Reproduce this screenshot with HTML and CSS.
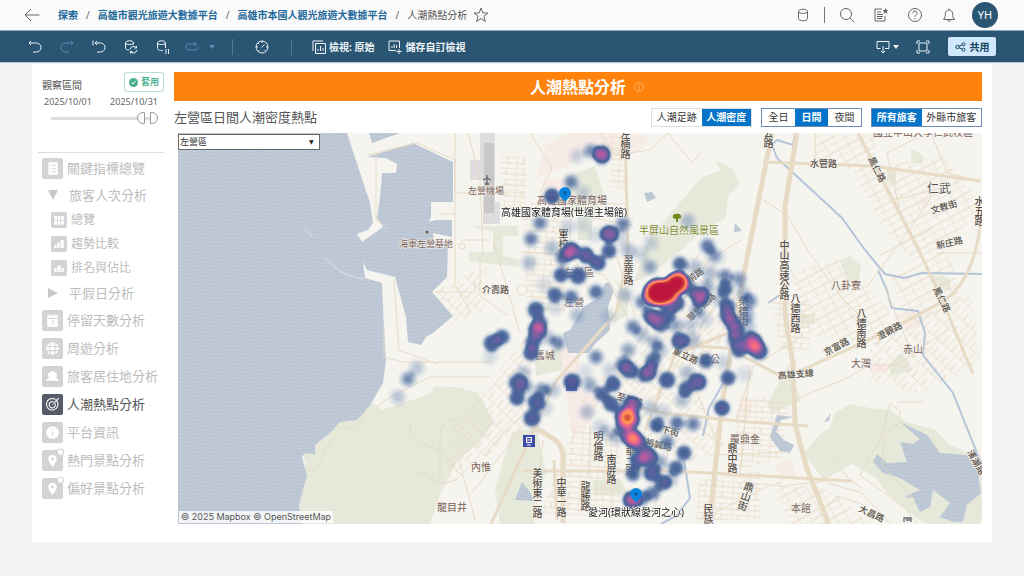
FILE: index.html
```html
<!DOCTYPE html>
<html lang="zh-Hant">
<head>
<meta charset="utf-8">
<meta name="viewport" content="width=device-width, initial-scale=1">
<title>人潮熱點分析</title>
<link rel="stylesheet" href="styles.css">
</head>
<body>
<header class="topbar">
  <button class="icon-btn back" aria-label="返回"><svg width="16" height="14" viewBox="0 0 16 14"><path d="M15.500 7H1M7 1 1 7l6 6"/></svg></button>
  <nav class="crumbs" aria-label="導覽路徑">
    <a href="#">探索</a><span class="slash">/</span>
    <a href="#">高雄市觀光旅遊大數據平台</a><span class="slash">/</span>
    <a href="#">高雄市本國人觀光旅遊大數據平台</a><span class="slash">/</span>
    <span class="current">人潮熱點分析</span>
  </nav>
  <button class="icon-btn star" aria-label="我的最愛"><svg width="16" height="16" viewBox="0 0 16 16"><path d="m8 1 1.800 4.900 5.200.2-4.100 3.200 1.500 5.200L8 11.500l-4.400 3 1.500-5.200L1 6.100l5.200-.2z"/></svg></button>
  <div class="top-actions">
    <button class="icon-btn narrow" aria-label="資料來源"><svg width="12" height="14" viewBox="0 0 12 14"><path d="M1.500 3.500c0-3 9-3 9 0v7c0 3-9 3-9 0zc0 2.500 9 2.500 9 0"/></svg></button>
    <span class="rule"></span>
    <button class="icon-btn" aria-label="搜尋"><svg width="16" height="16" viewBox="0 0 16 16"><circle cx="7" cy="7" r="5.500"/><path d="m11 11 4 4"/></svg></button>
    <button class="icon-btn" aria-label="清單"><svg width="16" height="16" viewBox="0 0 16 16"><path d="M9 2H2v12h10V9M4 5h4M4 7.500h6M4 9.500h6M4 11.500h5"/><path class="solid" d="m12.500 1 .9 2 2.100.2-1.600 1.400.5 2.200-1.900-1.200-1.900 1.200.5-2.200-1.600-1.400 2.100-.2z"/></svg></button>
    <button class="icon-btn" aria-label="說明"><svg width="16" height="16" viewBox="0 0 16 16"><circle cx="8" cy="8" r="6.500"/><path d="M5.800 6.300c0-3 4.400-2.800 4.400-.1C10.200 8 8 7.800 8 9.600M8 11v1.200"/></svg></button>
    <button class="icon-btn" aria-label="通知"><svg width="14" height="16" viewBox="0 0 14 16"><path d="M1.500 12.500h11C10.500 10.500 11 9 10.600 6.500 10.200 4 9 3 7 3S3.800 4 3.400 6.500C3 9 3.500 10.500 1.500 12.500zM7 3V1.500M5.500 12.700c0 2.200 3 2.200 3 0"/></svg></button>
    <button class="avatar">YH</button>
  </div>
</header>

<div class="toolbar">
  <button class="tool" aria-label="復原"><svg width="16" height="16" viewBox="0 0 16 16"><path d="M2 4h7.500a4.500 4.500 0 0 1 0 9H6M4 2 2 4l2 2"/></svg></button>
  <button class="tool dim" aria-label="重做"><svg width="16" height="16" viewBox="0 0 16 16"><path d="M14 4H6.500a4.500 4.500 0 0 0 0 9H10M12 2l2 2-2 2"/></svg></button>
  <button class="tool" aria-label="還原"><svg width="16" height="16" viewBox="0 0 16 16"><path d="M4 4h5.500a4.500 4.500 0 0 1 0 9H6M6 2 4 4l2 2M2 1.500v5"/></svg></button>
  <button class="tool" aria-label="重新整理資料"><svg width="16" height="16" viewBox="0 0 16 16"><path d="M6 11C3.500 11 2.500 10 2.500 9.500V4c0-3 8-3 8 0v1.500M2.500 4c0 2 8 2 8 0M7 10.500a3.600 3.600 0 0 1 6.500-1.500M13.500 7v2h-2M14 11a3.600 3.600 0 0 1-6.500 1.500M7.500 14.500v-2h2"/></svg></button>
  <button class="tool" aria-label="暫停資料更新"><svg width="16" height="16" viewBox="0 0 16 16"><path d="M8 11.500c-4 .2-5.500-1-5.500-2V4c0-3 8-3 8 0v5M2.500 4c0 2 8 2 8 0M11 10v5M13.500 10v5"/></svg></button>
  <button class="tool dim pill" aria-label="執行"><svg width="14" height="12" viewBox="0 0 14 12"><path d="M11 3H4C0 3 0 9 4 9h6c2.500 0 3-1.500 3-3M9.500 1l2 2-2 2"/></svg></button>
  <button class="tool dim caret" aria-label="更多執行選項"><svg width="6" height="4" viewBox="0 0 6 4"><path class="solid" d="M0 0h6L3 4z"/></svg></button>
  <span class="rule"></span>
  <button class="tool" aria-label="效能"><svg width="16" height="16" viewBox="0 0 16 16"><circle cx="8" cy="8" r="6"/><path d="m7.500 8.500 3-3M8 2v2M2 8h2M12 8h2M4 4l1.200 1.200M4.500 12l1-1M11.500 12l-1-1"/></svg></button>
  <span class="rule"></span>
  <button class="labelled"><svg width="14" height="14" viewBox="0 0 14 14"><path d="M3.500 3.500h10v10h-10zM11 1H1v10M6 11V9M8.500 11V6M11 11V8"/></svg>檢視: 原始</button>
  <button class="labelled"><svg width="14" height="14" viewBox="0 0 14 14"><path d="M8 10.500H1V1h10.500v7M4 8V6M6.200 8V4M8.500 8V5M11 9v5M8.500 11.500h5"/></svg>儲存自訂檢視</button>
  <div class="tool-right">
    <button class="download" aria-label="下載"><svg width="14" height="14" viewBox="0 0 14 14"><path d="M4.500 8.500H1v-7h12v7H9M7 6v7M5 11l2 2 2-2"/></svg><svg width="6" height="4" viewBox="0 0 6 4"><path class="solid" d="M0 0h6L3 4z"/></svg></button>
    <button class="tool" aria-label="全螢幕"><svg width="14" height="14" viewBox="0 0 14 14"><path d="M3 3h8v8H3zM1 4V1h3M10 1h3v3M13 10v3h-3M4 13H1v-3"/></svg></button>
    <button class="share"><svg width="11" height="10" viewBox="0 0 11 10"><circle cx="2.500" cy="5" r="1.700"/><circle cx="8.500" cy="2.300" r="1.500"/><circle cx="8.500" cy="7.700" r="1.500"/><path d="m4 4.300 3-1.300M4 5.700 7 7"/></svg>共用</button>
  </div>
</div>

<main class="dashboard">
  <aside class="side">
    <form class="period">
      <div class="period-head"><span>觀察區間</span><button type="button" class="apply"><svg width="9" height="9" viewBox="0 0 9 9"><circle cx="4.500" cy="4.500" r="4.500"/><path d="m2.500 4.500 1.500 1.500 2.500-3"/></svg>套用</button></div>
      <div class="dates"><label for="from">2025/10/01</label><label for="to">2025/10/31</label></div>
      <div class="range">
        <input id="from" class="low" type="range" min="0" max="100" value="87">
        <input id="to" class="high" type="range" min="0" max="100" value="100">
      </div>
    </form>
    <ul class="menu">
      <li><a href="#"><svg class="tile" viewBox="0 0 20 20"><path d="M6 4h9v12H6z"/><path class="cut" d="M8 7h1M10 7h3M8 10h1M10 10h3M8 13h1M10 13h3"/></svg>關鍵指標總覽</a></li>
      <li class="group"><a href="#"><svg class="tri" viewBox="0 0 10 10"><path d="M0 0h10L5 10z"/></svg>旅客人次分析</a></li>
      <li class="sub"><a href="#"><svg class="tile" viewBox="0 0 20 20"><path d="M4 5h12v11H4z"/><path class="cut" d="M8 5v11M12 5v11M4 10.500h12"/></svg>總覽</a></li>
      <li class="sub"><a href="#"><svg class="tile" viewBox="0 0 20 20"><path d="M4 11h3v4H4zM8 8h3v7H8zM12 5h4v10h-4z"/></svg>趨勢比較</a></li>
      <li class="sub"><a href="#"><svg class="tile" viewBox="0 0 20 20"><path d="M4 10h3v5H4zM8 7h4v8H8zM13 10h3v5h-3z"/></svg>排名與佔比</a></li>
      <li class="group"><a href="#"><svg class="tri" viewBox="0 0 10 10"><path d="m0 0 10 5-10 5z"/></svg>平假日分析</a></li>
      <li><a href="#"><svg class="tile" viewBox="0 0 20 20"><path d="M5 5h2V4h1v1h4V4h1v1h2v11H5z"/><path class="cut" d="M6 8h8M9 10.500h1.500V14"/></svg>停留天數分析</a></li>
      <li><a href="#"><svg class="tile" viewBox="0 0 20 20"><circle cx="10" cy="10" r="6"/><path class="cut" d="M4 8h12M4 12h12M8 4c-1 4-1 8 0 12M12 4c1 4 1 8 0 12"/></svg>周遊分析</a></li>
      <li><a href="#"><svg class="tile" viewBox="0 0 20 20"><path d="M4 14c0-2 2-1.500 2.500-3C5 8 6 6 7.500 6.500 8 4.500 12 4.500 12.500 6.500 14 6 15 8 13.500 11c.5 1.500 2.500 1 2.500 3z"/></svg>旅客居住地分析</a></li>
      <li><a class="on" href="#" aria-current="page"><svg class="tile" viewBox="0 0 20 20"><path class="ring" d="M14.500 7a5.500 5.500 0 1 1-2-2M12.500 9a3 3 0 1 1-1.500-1.500M10 10l6-6M13 5l.5 1.500L15 7"/></svg>人潮熱點分析</a></li>
      <li><a href="#"><svg class="tile" viewBox="0 0 20 20"><circle cx="10" cy="10" r="6"/><path class="cut" d="M10 9v4M10 6.500v1"/></svg>平台資訊</a></li>
      <li><a href="#"><svg class="tile" viewBox="0 0 20 20"><path d="M10 16C7 12 6 10 6 8.500a4 4 0 0 1 8 0C14 10 13 12 10 16z"/><circle class="hole" cx="10" cy="8.500" r="1.300"/><circle class="mark" cx="17.500" cy="2" r="3"/></svg>熱門景點分析</a></li>
      <li><a href="#"><svg class="tile" viewBox="0 0 20 20"><path d="M10 16C7 12 6 10 6 8.500a4 4 0 0 1 8 0C14 10 13 12 10 16z"/><circle class="hole" cx="10" cy="8.500" r="1.300"/><circle class="mark" cx="17.500" cy="2" r="3"/></svg>偏好景點分析</a></li>
    </ul>
  </aside>

  <section class="content">
    <h1 class="banner">人潮熱點分析<svg width="10" height="10" viewBox="0 0 10 10"><circle cx="5" cy="5" r="4.500"/><path d="M5 4v4M5 2v1"/></svg></h1>
    <div class="controls">
      <h2>左營區日間人潮密度熱點</h2>
      <div class="seg plain"><button>人潮足跡</button><button aria-pressed="true">人潮密度</button></div>
      <div class="seg three"><button>全日</button><button aria-pressed="true">日間</button><button>夜間</button></div>
      <div class="seg wide"><button aria-pressed="true">所有旅客</button><button>外縣市旅客</button></div>
    </div>
    <div class="map">
      <svg class="canvas" viewBox="178 133 804 391" preserveAspectRatio="xMidYMid slice" role="img" aria-label="左營區人潮密度地圖">
        <defs>
          <pattern id="waves" width="28" height="7" patternUnits="userSpaceOnUse"><rect width="28" height="7" fill="#c0cad6"/><path d="M0 2q7-2 14 0t14 0M0 5.500q7-2 14 0t14 0" fill="none" stroke="#b5c2d0" stroke-width=".8"/></pattern>
          <pattern id="grid" width="17" height="11" patternUnits="userSpaceOnUse" patternTransform="rotate(4)"><path d="M0 0h17M0 0v11M7 0v6M0 6h17" class="lane"/></pattern>
          <pattern id="gridB" width="15" height="12" patternUnits="userSpaceOnUse" patternTransform="rotate(-48)"><path d="M0 0h15M0 0v12M0 6h9" class="lane"/></pattern>
          <pattern id="gridC" width="14" height="11" patternUnits="userSpaceOnUse" patternTransform="rotate(62)"><path d="M0 0h14M0 0v11M8 0v11" class="lane"/></pattern>
          <radialGradient id="spot"><stop offset="0" stop-color="#000"/><stop offset=".3" stop-color="#000" stop-opacity=".93"/><stop offset=".6" stop-color="#000" stop-opacity=".62"/><stop offset=".8" stop-color="#000" stop-opacity=".27"/><stop offset="1" stop-color="#000" stop-opacity="0"/></radialGradient>
          <filter id="ramp" filterUnits="userSpaceOnUse" x="178" y="133" width="804" height="391" color-interpolation-filters="sRGB">
            <feColorMatrix values="0 0 0 1 0  0 0 0 1 0  0 0 0 1 0  0 0 0 1 0"/>
            <feComponentTransfer>
              <feFuncR type="table" tableValues=".55 .52 .42 .27 .24 .36 .5 .75 .97 1 .74"/>
              <feFuncG type="table" tableValues=".65 .62 .53 .39 .36 .36 .36 .36 .42 .62 .08"/>
              <feFuncB type="table" tableValues=".78 .76 .7 .6 .58 .61 .63 .62 .5 .3 .24"/>
              <feFuncA type="table" tableValues="0 .22 .5 .82 .95 .97 .98 1 1 1 1"/>
            </feComponentTransfer>
          </filter>
        </defs>
        <rect x="178" y="133" width="804" height="391" fill="#f5f4ef"/>
        <g fill="#e6e8d9">
          <path d="M382 410 448 388l30 4 16 30-14 20-22 18-18 34-10 30H290l8-30 8-30-5-18 13-9 12-12 12-10 16-2 13-14z"/>
          <path d="M434 386l30 2 2 30-24 24-30-10z"/>
          <path d="M634 282l14-42 30-35 24-28 30-10 8 17-12 12-2 22-20 10-34 30-28 20z"/>
          <path d="M565 178l30-12 8 25-10 30-22-10zM470 226h48v10h-15v20l16 3v8l-50-6v-9h24v-20zM578 210h14v30h-14zM535 360l25-14 12 22-36 8zM512 432l25-4 9 45-14 40 3 11h-35l-5-35zM593 480h28l8 15h-36zM610 275l10 13-6 35 13-8 2-22z"/>
          <path d="M804 454l14-18 12-8 4-14 16-10 20 4 20 2 16 12 30 8 12 14 33 14 12 30-15 40h-42l-20-10-30-26-10-14-24-14-28 16z"/>
          <path d="M767 405l22-42 12 38-30 12zM840 260l10-4 11 10-3 18-10-2zM888 170h8v13h-10zM911 148l12 7v8h-12zM888 365l14-12 11 17-22 6zM933 275l18 4-2 12-15-6zM800 314h15v10h-15zM715 160l14 7-6 8z"/>
        </g>
        <path class="pink" d="M546 145l22-12h54l28 3-10 15-28 7-18-12-30 22-28 10zM543 179h20v16h-20zM560 345l20 14-8 28 28 10-10 26-18 15zM775 466l16-8 5 18-14 5zM893 315l22-4 12 10-20 10zM918 195l12 5-7 8zM745 396l8 8-4 15-14-2zM870 365l16-2v10h-16z"/>
        <path d="M480 133h15v69h5v22h-17v-44h-13v-20h10z" fill="#dedcde"/><path d="M484 143h10v70h-10z" fill="#cac7c9"/>
        <g class="hatch">
          <path fill="url(#grid)" d="M522 205h43v110l-38-8zM500 155h26v55h-22zM610 135h17v55h-17zM575 425l45 8v85l-80-5zM740 395l50 5-8 60-50 10zM770 300h40v50h-30zM700 480l60-10v50h-65z"/>
          <path fill="url(#gridB)" d="M640 295l60-45 40 40-30 80-70 10zM450 430l90-110-20 110-70 55zM550 390l30 10 45-50 60 15 40 80-40 20-70-50zM870 345l100-55 10 70-60 35-50-15zM436 290l50-25v45l-35 15z"/>
          <path fill="url(#gridC)" d="M853 170l90-15 38 50-55 70-45-50zM790 270l50-10 50 50-10 35-72-10zM890 275l60-20 10 45-50 30zM815 135h60v34h-60zM770 480l60 10 40 34h-80z"/>
        </g>
        <g fill="url(#waves)">
          <path d="M178 133h169l23 70 3 20-5 7-11 4 5 8 21-15-6-9 3-21 2-24h14l1-9-11-6-19-1 46-14 40 19v40h-22v15l-2 5 7-2h16v17l-19-4 1 7 14 2-1 35-15 15 21 24-20 17-7 4-5 8-13-3-2-25-11-40-28-7-4-8 2 16 17 5 2 47 2 30-3 23-14 24-12 13-17 2-10 11-15 12v9l-10-1-3 4 5 18-8 30 3 19H178z"/>
          <path d="M369 133l3 10 28-10z"/>
          <path d="M610 282l4 8-6 17 2 23-14 13-8 10h-20l-5-20 7-3 13-23 17-10 5-14z"/>
          <path d="M900 422l27 13 13 18 27 2 11 18 3 20-14 12-4 17h-10l-13-5 10-14-17-13-3 17-10 5-7-14-9-1 16-7-20-12-17-5-10-11 4-8 10 9 20-1-7-20 13 2 7-5z"/>
          <path d="M793 417l-16-2-7 22 10 14 10 2 4-8-10-5-8-8 5-12zM644 193l8-1 4 6-9 4zM735 223l7 8-8 1zM522 482l8 10 4 9-19-1zM824 422l7-9-2 8z"/>
        </g>
        <path d="M305 229l8 8M325 258l12 11q10 7 26 10" fill="none" stroke="#dce3e6"/>
        <path class="river" d="M795 133l-2 12-16-5-5 5 5 13 65 60 23 32 20 24 19 4 18-5 60 1M878 270l8 18 6 20 26 3 7 22-2 22 30 38 28 70M725 380l-16 28-6 28M684 460l6 38-14 18-15 8M768 303l12-8"/>
        <g class="roads">
          <path class="huge" d="M772 133l-28 140-21 125-14 126M797 133l-12 73v108l8 50 2 60 12 45 22 55M563 523v-65q0-15-14-22l-25-15"/>
          <path class="big" d="M625 133l3 120-12 60-60 68-65 143M672 345l55 3 50 26 16 3M595 395l68 18 85 9 60 4M763 162l108 4 110 15M858 133l60 115 30 66 25 60M982 210q-5 62-32 86-30 22-157 78M522 471h150l180 10M645 430l30-75 60-25M557 520l-3-60"/>
          <path d="M376 153v66l12 10M367 155l50-12 38 17v125l16 28M455 133v60h70M440 214h15M394 280l5 70 38 14M384 327v30l18 5h90M468 133l12 45 3 76M530 204h95M522 252l95 5 18 60M493 240l27 93M480 256v40l28 20M435 292h40v-12M461 240h30M570 205v45l20 43M580 270l25 5 25 48M632 225l-40-7M613 385l40-68 45-50 45-28M650 405l65-100M681 394l24-78M735 422l18-55 50-32M740 475l10-110M709 455l80-3M742 482l47 5M790 485l44-5M700 520l70-35M815 520l22-24 25 8 20 20M828 483l34 10 28 31M860 475l44 32 13 17M860 475l20-35 10-37 10 8 0 11-16 12-2 31 33 35M793 400l50-20 27-15h28l50-36M898 402l25 0M760 198l28 18 20 35 33 46 25 25M866 288l43-58 22-32M880 255l50-25M931 133l16 40 34 8M894 200l47-12M936 253h46M884 286l20 48 10 25M917 138l-30 15 12 55M815 133v30M600 133l15 22 35-5 18-17M668 133l24 30 10-12M530 133l22 35-12 25M485 455l18-22 58-55M475 520l-16-60M470 495l58-75M535 520l8-80M376 407l14-10 40-20h60M368 407l-12 20-17 1-12 20-12 22h-7M440 480v-46q0-13 16-14M410 425q0 17 30 25l15 17M412 478q10-10 18 0 14 10 28 0M590 425v90M611 430v80M673 430l-20 85M720 450l-30-75M830 455q16 24 32 33"/>
          <circle cx="522" cy="290" r="5"/><circle cx="462" cy="246" r="3"/>
        </g>
        <g class="place">
          <text x="468" y="194">左營機場</text><text x="399" y="247">海軍左營基地</text><text x="537" y="204" class="large">高雄國家體育場</text><text x="564" y="276" class="large">左營區</text><text x="564" y="306" class="large">左營</text><text x="535" y="359" class="large">舊城</text><text x="471" y="471" class="large">內惟</text><text x="437" y="511" class="large">龍目井</text><text x="831" y="289" class="large">八卦寮</text><text x="903" y="353" class="large">赤山</text><text x="851" y="367" class="large">大灣</text><text x="730" y="443" class="large">覆鼎金</text><text x="791" y="512" class="large">本館</text><text x="700" y="363" class="large">農公</text><text x="873" y="136" class="large">國立中山大學仁武校區</text>
          <text x="927" y="193" class="town">仁武</text><text x="639" y="234" class="park">半屏山自然風景區</text>
        </g>
        <g class="street">
          <text x="482" y="293">介壽路</text><text x="810" y="167">水管路</text>
          <text transform="translate(868 159) rotate(63)">鳳仁路</text><text transform="translate(933 289) rotate(64)">鳳仁路</text><text transform="translate(932 214) rotate(-17)">文教街</text><text transform="translate(937 249) rotate(-13)">新庄路</text><text transform="translate(826 356) rotate(-28)">京富路</text><text transform="translate(879 340) rotate(-28)">澄觀路</text><text transform="translate(778 379) rotate(-5)">高雄支線</text><text transform="translate(858 511) rotate(25)">大昌路</text><text transform="translate(967 452) rotate(61)">濱湖路</text><text transform="translate(672 353) rotate(25)">重立路</text><text transform="translate(616 399) rotate(16)">至聖路</text><text transform="translate(652 430) rotate(14)">崇下街</text><text transform="translate(645 445) rotate(12)">裕誠路</text><text transform="translate(690 283) rotate(-35)">前路</text><text transform="translate(691 322) rotate(-45)">翠思湖路</text>
          <g class="vertical">
            <text x="625" y="129">左楠路</text><text x="563" y="229">軍校路</text><text x="628" y="255">翠華路</text><text x="784" y="240">中山高速公路</text><text x="795" y="293">八德西路</text><text x="861" y="308">八德南路</text><text x="743" y="296">榮德街</text><text x="598" y="431">明倫路</text><text x="611" y="454">南屏路</text><text x="537" y="468">美術東二路</text><text x="561" y="477">中華一路</text><text x="585" y="481">龍勝路</text><text x="732" y="443">鼎中路</text><text x="708" y="504">民族</text><text x="768" y="128">公路</text><text x="630" y="446">華二路</text><text x="979" y="196">水五路</text>
            <text transform="translate(750 482) rotate(18)">鼎山街</text>
          </g>
        </g>
        <g class="rail"><rect x="523" y="435" width="12" height="12"/><rect x="566" y="380" width="11" height="11"/><path d="M526.500 437.500h5v5h-5zM526.500 440h5M527 445h4" /></g>
        <path d="M487 175v10M483 180l4-2 4 2M485 184h4M904 522v-4h7v4M906 520h4" fill="none" stroke="#666" stroke-width="1.300"/>
        <path d="M673 218c-1-3 1-4 3-4 3-1 6 1 5 4l-3 1v3h-2v-3z" fill="#71881f"/>
        <circle cx="427" cy="232" r="1.500" fill="#735d52"/>
        <g id="heat" filter="url(#ramp)"></g>
        <g class="pin"><path d="M565 202c-4-5-6-6-6-9a6 6 0 0 1 12 0c0 3-2 4-6 9zM636 503c-4-5-6-6-6-9a6 6 0 0 1 12 0c0 3-2 4-6 9z"/><circle cx="565" cy="193" r="1.800"/><circle cx="636" cy="494" r="1.800"/></g>
        <g class="spot-name"><text x="564" y="216">高雄國家體育場(世運主場館)</text><text x="636" y="516">愛河(環狀線愛河之心)</text></g>
      </svg>
      <select class="district" aria-label="行政區"><option>左營區</option></select>
      <p class="credit"><a href="#">© 2025 Mapbox</a> <a href="#">© OpenStreetMap</a></p>
    </div>
  </section>
</main>
<script src="heat.js"></script>
</body>
</html>
```
FILE: styles.css
```css
* { box-sizing: border-box; }
body {
  margin: 0;
  min-height: 100vh;
  background: #f4f4f5;
  color: #333;
  font: 10px/16px "Noto Sans", "Noto Sans CJK TC", sans-serif;
}
button, select, input { font: inherit; color: inherit; margin: 0; }
button { border: 0; padding: 0; background: none; cursor: pointer; }
a { color: inherit; text-decoration: none; }
svg { display: block; flex: none; }

.topbar svg, .toolbar svg { fill: none; stroke: currentColor; stroke-width: 1; }
.topbar svg .solid, .toolbar svg .solid { fill: currentColor; stroke: none; }
.topbar { display: flex; align-items: center; height: 30px; padding: 0 26px 0 16px; background: #fafafa; }
.icon-btn { display: grid; place-items: center; width: 34px; height: 28px; color: #666; }
.back { width: 32px; }
.star { width: 28px; }
.narrow { width: 28px; }
.crumbs { display: flex; gap: 8px; margin-left: 10px; white-space: nowrap; }
.crumbs a { color: #22699a; font-weight: 700; }
.crumbs .slash { color: #666; }
.current { color: #555; }
.top-actions { display: flex; align-items: center; margin-left: auto; }
.top-actions .rule { width: 1px; height: 16px; margin: 0 5px 0 7px; background: #777; }
.avatar { width: 26px; height: 26px; margin-left: 6px; border-radius: 50%; background: #2a5674; color: #fff; font-size: 11px; }

.toolbar {
  display: flex;
  align-items: center;
  height: 33px;
  padding: 0 28px 0 19px;
  border-top: 1px solid #8aa3b5;
  border-bottom: 1px solid #b5c5d1;
  background: #2a5674;
  color: #eef4f8;
}
.tool { display: grid; place-items: center; width: 32px; height: 28px; }
.dim { color: #5d8fb0; }
.pill { width: 26px; }
.caret { width: 14px; }
.toolbar .rule { width: 1px; height: 16px; margin: 0 13px; background: #4e7d9c; }
.labelled { display: flex; align-items: center; gap: 3px; margin-left: 7px; font-weight: 700; }
.labelled + .labelled { margin-left: 14px; }
.tool-right { display: flex; align-items: center; margin-left: auto; }
.download { display: flex; align-items: center; gap: 3px; margin-right: 8px; }
.share { display: flex; align-items: center; justify-content: center; gap: 4px; width: 48px; height: 19px; margin-left: 9px; border-radius: 2px; background: #d0e8fb; color: #174562; font-weight: 700; }

.dashboard {
  display: grid;
  grid-template-columns: 142px minmax(0, 1fr);
  margin: 1px 32px 32px;
  padding: 8px 10px 18px 0;
  background: #fff;
}
.side { padding-left: 6px; color: #555; }
.period { width: 126px; height: 81px; border-bottom: 1px solid #ddd; }
.period-head { display: flex; align-items: end; justify-content: space-between; padding-left: 4px; }
.apply { display: flex; align-items: center; justify-content: center; gap: 3px; width: 40px; height: 20px; margin-bottom: 1px; border: 1px solid #b5e1d3; border-radius: 3px; color: #4fb394; font-size: 9px; font-weight: 700; }
.apply svg { fill: #4aae90; }
.apply path { fill: none; stroke: #fff; }
.dates { display: flex; justify-content: space-between; padding: 1px 6px 0; font-size: 9px; line-height: 16px; color: #666; }
.range { display: grid; width: 107px; margin: 1px 0 0 13px; height: 14px; background: linear-gradient(#ddd, #ddd) center / 100% 3px no-repeat; }
.range input { grid-area: 1 / 1; width: 100%; height: 14px; appearance: none; background: none; pointer-events: none; }
.range input::-webkit-slider-thumb { appearance: none; width: 8px; height: 12px; border: 1px solid #999; background: #fff; pointer-events: auto; }
.low::-webkit-slider-thumb { border-radius: 6px 0 0 6px; }
.high::-webkit-slider-thumb { border-radius: 0 6px 6px 0; }

.menu { margin: 0; padding: 1px 0 0; list-style: none; color: #bdbdbd; font-size: 13px; }
.menu a { display: flex; align-items: center; gap: 4px; height: 28px; padding-left: 4px; white-space: nowrap; }
.menu .group a { height: 26px; gap: 11px; padding-left: 10px; }
.menu .sub a { height: 24px; padding-left: 13px; font-size: 12px; }
.menu .on { color: #555; }
.tile { width: 21px; height: 21px; border-radius: 2px; background: #d3d3d3; fill: #fff; overflow: visible; }
.sub .tile { width: 16px; height: 16px; }
.on .tile { background: #555b66; }
.tile .cut { fill: none; stroke: #d3d3d3; stroke-width: 1; }
.tile .ring { fill: none; stroke: #fff; stroke-width: 1; }
.tile .hole { fill: #d3d3d3; }
.tile .mark { fill: #fff; stroke: #d3d3d3; }
.tri { width: 10px; height: 10px; fill: #c8c8c8; }

.banner { display: grid; grid-template-columns: 1fr auto 1fr; align-items: center; gap: 8px; height: 29px; margin: 0; background: #ff820c; color: #fff; font-size: 16px; font-weight: 700; }
.banner::before { content: ""; }
.banner svg { fill: none; stroke: #ffb36a; }
.controls { display: flex; align-items: center; height: 32px; }
.controls h2 { margin: 0 auto 0 0; color: #555; font-size: 13px; font-weight: 400; }
.seg { display: flex; height: 19px; margin-left: 9px; border: 1px solid #6d8cb5; }
.seg button { flex: auto; white-space: nowrap; }
.seg button[aria-pressed="true"] { background: #0374c8; color: #fff; font-weight: 700; }
.plain { width: 101px; border-color: #ddd; }
.three { width: 101px; }
.wide { width: 111px; }

.map { position: relative; margin-left: 4px; overflow: hidden; }
.canvas { width: 100%; height: auto; }
.district { position: absolute; top: 1px; left: 0; width: 142px; height: 16px; padding: 0 1px; border: 1px solid #666; border-radius: 0; appearance: none; background: #fff; font-size: 9px; line-height: 14px; }
.map::after { content: "▼"; position: absolute; top: 3px; left: 131px; color: #222; font: 6px/12px "DejaVu Sans", sans-serif; pointer-events: none; }
.credit { position: absolute; bottom: 1px; left: 1px; margin: 0; padding: 0 2px; background: rgb(255 255 255 / 80%); color: #555; font: 9px/12px Inter, "Liberation Sans", sans-serif; }

.lane { fill: none; stroke: #e8dac3; stroke-width: 1; }
.pink { fill: #f7ebe6; }
.river { fill: none; stroke: #b5c5d8; stroke-width: 2; }
.roads { fill: none; stroke: #e8dbc6; stroke-width: 1; stroke-linejoin: round; }
.roads .big { stroke-width: 3; }
.roads .huge { stroke-width: 5; }
.canvas text { font-size: 9px; paint-order: stroke; stroke: #f5f4ef; stroke-width: 1px; }
.canvas text.large { font-size: 10px; }
.place text { fill: #786058; }
.canvas text.town { font-size: 12px; fill: #555; }
.canvas text.park { font-size: 10px; fill: #7a8c30; }
.street text { fill: #574f47; font-weight: 500; }
.canvas .vertical text { writing-mode: vertical-rl; font-size: 10px; }
.rail rect { fill: #3c4aa8; }
.rail path { fill: none; stroke: #fff; }
.pin path { fill: #0b84dc; }
.pin circle { fill: #075fa5; }
.canvas .spot-name text { font-size: 10px; text-anchor: middle; fill: #111; stroke: #fff; stroke-width: 1px; }
```
FILE: heat.js
```js
// Visitor density samples: x, y, weight, optional radius.
const samples = [
  [602,153,.5],[602,157,.4],[591,151,.28],[577,156,.15],[571,182,.3],[552,196,.48],[583,192,.15],[540,223,.3],[531,239,.3],[529,263,.2],
  [609,234,.62,12],[609,251,.42],[623,224,.3],[571,251,.68,12],[563,258,.35],[585,254,.42],[588,258,.25],[598,263,.48],[561,275,.42],[578,276,.45,12],[555,295,.4],[571,297,.33],[596,292,.35],[536,310,.45,12],
  [577,315,.2],[552,248,.2],[568,227,.15],[628,250,.2],[651,243,.15],[641,254,.15],[688,221,.2],[680,264,.38],[650,267,.25],[625,295,.2],[608,317,.15],[583,225,.12],[595,235,.12],[544,285,.12],[555,308,.12],[620,237,.15],
  [655,293,.99,15],[655,294,.96,14],[661,294,.99,15],[663,295,.96,14],[668,291,.99,15],[669,289,.96,14],[676,284,.99,14],[677,283,.96,13],[658,288,.96,13],[680,281,.8,12],
  [700,297,.68,12],[690,289,.4],[676,303,.5,12],[667,313,.45,12],[650,315,.45],[655,320,.45],[661,325,.4],[633,327,.3],[707,245,.2],[713,255,.15],[642,302,.3],[695,267,.2],[710,273,.2],
  [540,323,.4],[537,330,.62,12],[533,342,.45],[531,353,.47],[492,343,.45,12],[502,337,.42],[490,357,.12],[558,343,.3],[547,337,.2],
  [517,383,.45,12],[525,386,.3],[523,373,.2],[517,398,.45],[536,402,.47,12],[542,390,.3],[553,390,.18],[532,418,.48,12],[545,408,.15],[572,382,.52,12],[596,357,.3],[590,385,.25],[613,384,.47],[602,394,.4],[611,404,.45],
  [629,370,.48,12],[623,364,.35],[628,350,.25],[653,360,.38],[650,370,.42],[647,375,.35],[655,343,.25],[667,380,.46,12],[680,341,.52,12],[693,340,.2],[706,361,.4],[698,382,.55,12],[686,389,.44],[687,373,.2],[682,400,.2],[722,408,.5],
  [628,419,.93,15],[628,415,.5,8],[629,403,.35],[634,405,.5],[621,413,.3],[622,428,.3],[631,437,.75,12],[636,441,.55,12],[642,445,.3],[648,456,.64,12],[638,460,.5,12],
  [657,425,.42],[677,423,.33],[693,424,.3],[667,442,.3],[684,453,.42],[676,468,.4],[652,473,.5,12],[633,474,.38],[663,483,.42],[653,493,.33],[632,500,.7,12],[642,498,.35],[587,412,.2],[600,427,.15],[607,433,.15],[617,437,.2],[650,408,.18],[660,462,.25],[670,480,.2],[663,412,.15],
  [725,276,.3],[725,289,.42],[739,279,.27],[750,301,.3],[708,247,.15],[717,257,.15],[707,287,.25],[728,306,.4],[727,315,.45],[732,322,.5],[736,331,.5],[735,340,.4],[739,350,.45],[743,293,.2],[720,300,.2],[747,315,.25],[748,327,.2],
  [752,343,.76,14],[759,351,.55,12],[723,362,.15],[728,378,.42],[744,374,.12],[417,368,.18],[408,379,.28],[398,397,.18],[640,375,.2],[642,335,.2],[675,325,.25],[660,350,.2],[697,310,.25],[705,320,.15],[690,325,.18],[610,370,.15],[585,372,.12]
];
const layer = document.getElementById("heat");
for (const [x, y, weight, radius = 11] of samples) {
  const dot = document.createElementNS("http://www.w3.org/2000/svg", "circle");
  dot.setAttribute("cx", x);
  dot.setAttribute("cy", y);
  dot.setAttribute("r", radius);
  dot.setAttribute("fill", "url(#spot)");
  dot.setAttribute("opacity", weight);
  layer.append(dot);
}
```
